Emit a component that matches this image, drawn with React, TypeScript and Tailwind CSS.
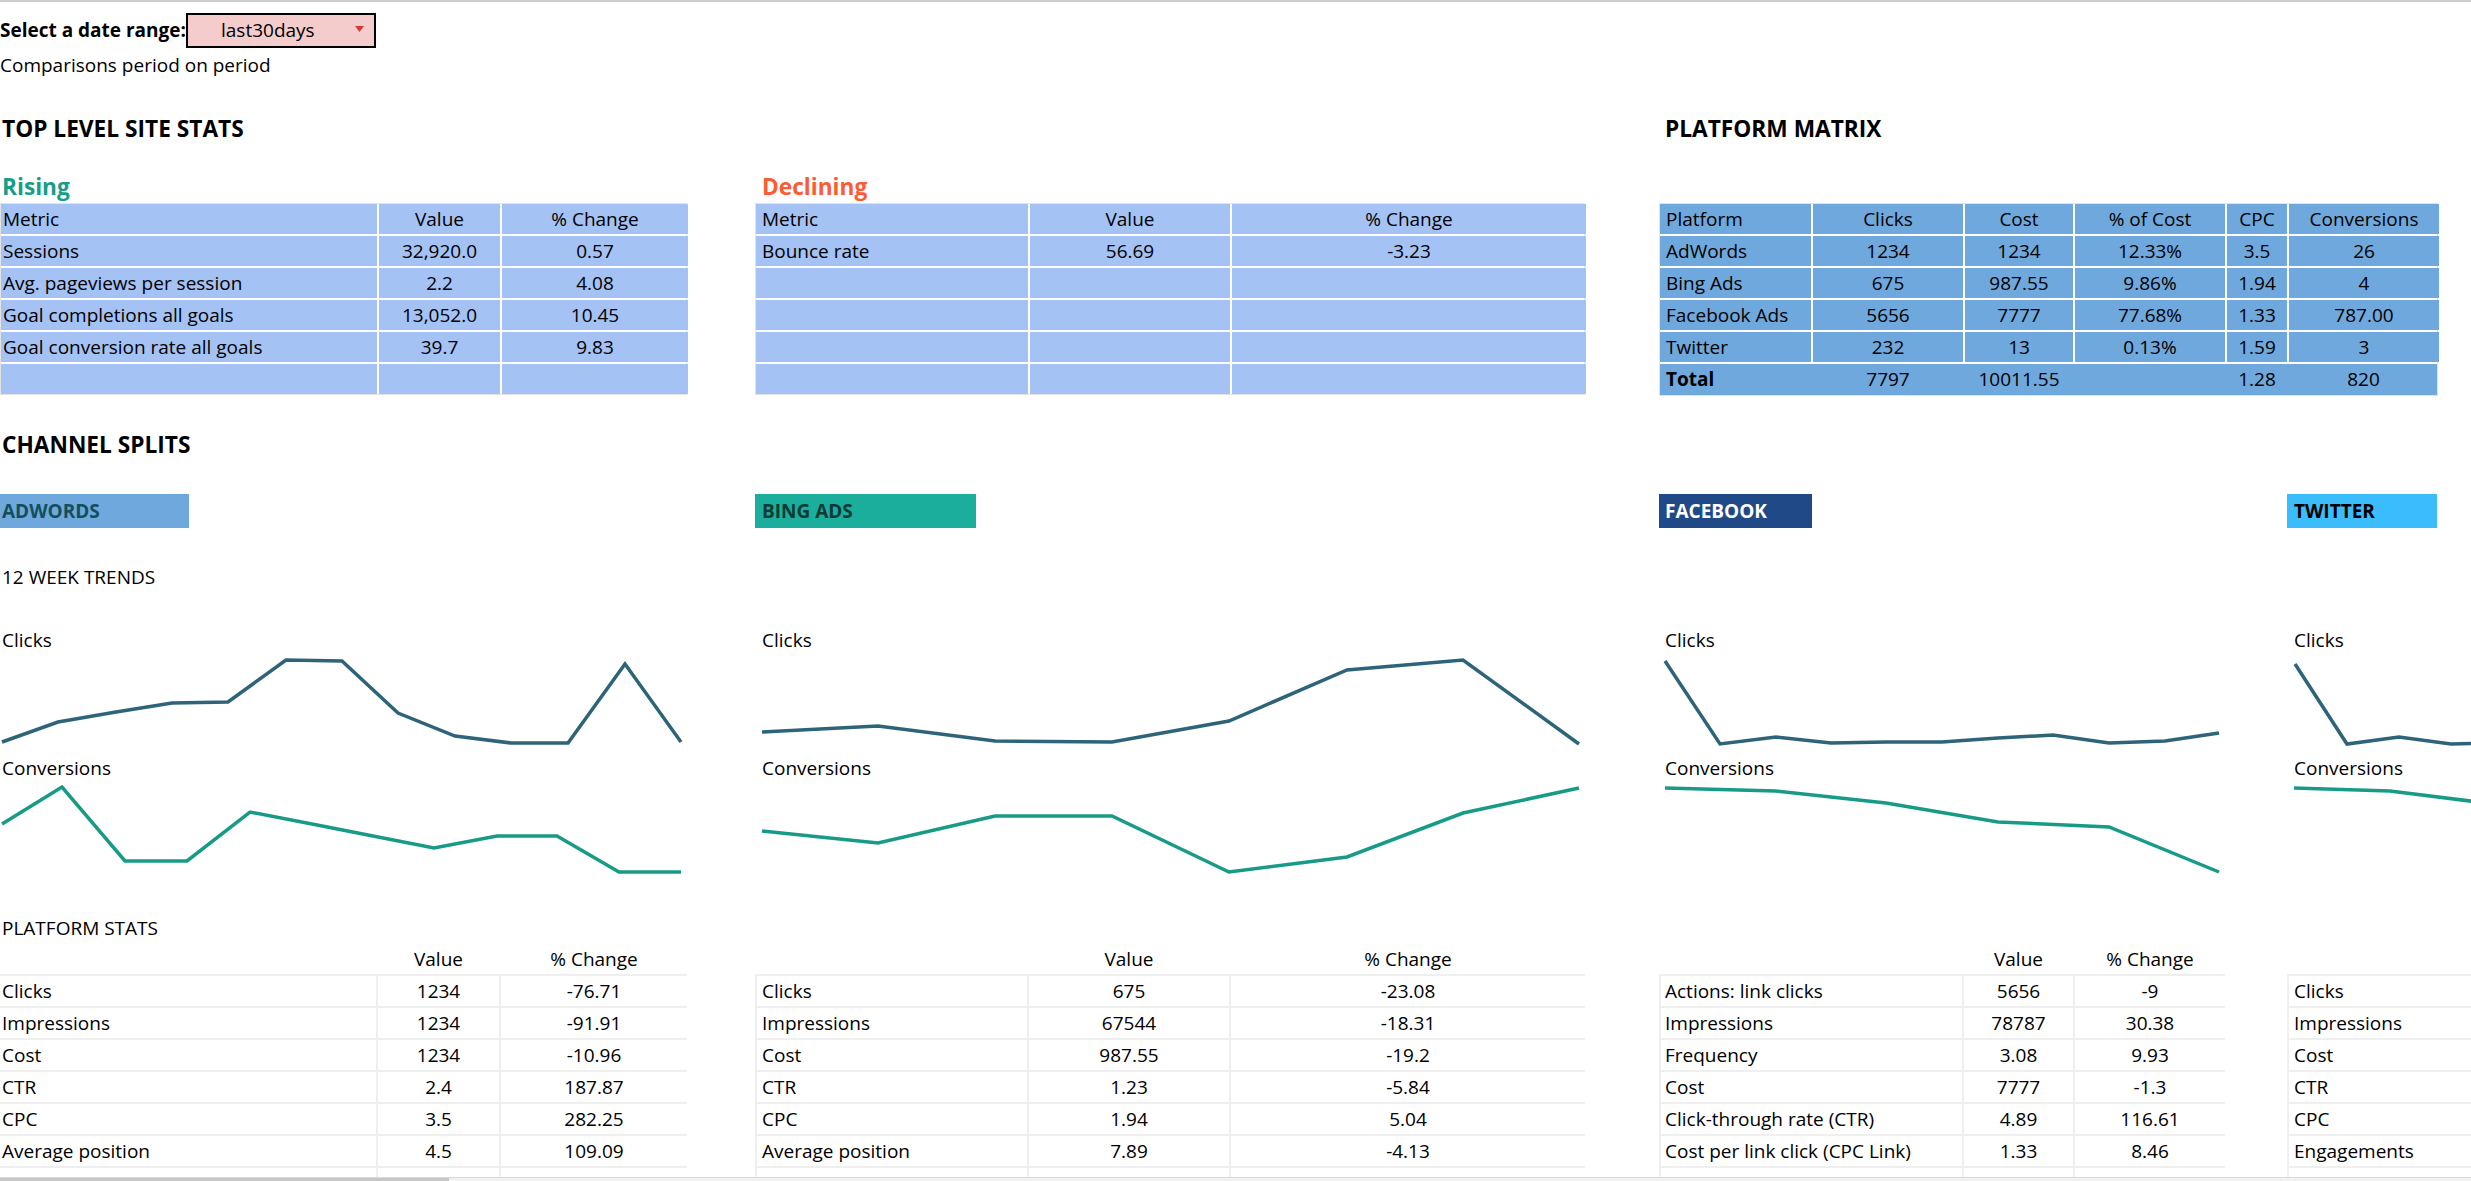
import type { ReactNode } from 'react';

type Pt = [number, number];

const CLICKS = '#2e6479';
const CONV = '#179b87';

// spark line drawn in the column's own pixel space
function Trend({ points, color, width }: { points: Pt[]; color: string; width: number }) {
  return (
    <svg width={width} height={96} className="block overflow-visible">
      <polyline
        points={points.map((p) => p.join(',')).join(' ')}
        fill="none"
        stroke={color}
        strokeWidth={3.5}
        strokeLinejoin="miter"
      />
    </svg>
  );
}

function FilledTable({
  cols,
  rows,
  fill,
  pad,
}: {
  cols: string;
  rows: string[][];
  fill: string;
  pad: string;
}) {
  return (
    <div className={`grid ${cols} gap-[2px] border border-[#e3e3e3] bg-white`}>
      {rows.map((r, i) =>
        r.map((c, j) => (
          <div
            key={`${i}-${j}`}
            className={`${fill} h-[30px] flex items-center whitespace-nowrap ${j === 0 ? `${pad} justify-start` : 'justify-center'}`}
          >
            {c}
          </div>
        )),
      )}
    </div>
  );
}

function StatsTable({
  cols,
  rows,
  pad,
  flush,
  noHeader,
}: {
  cols: string;
  rows: string[][];
  pad: string;
  flush?: boolean;
  noHeader?: boolean;
}) {
  const all = [...rows, ['', '', '']];
  return (
    <div>
      <div className={`grid ${cols} gap-[2px] h-[30px] items-center ${flush ? '' : 'pl-[2px]'}`}>
        <div />
        <div className="text-center">{noHeader ? '' : 'Value'}</div>
        <div className="text-center">{noHeader ? '' : '% Change'}</div>
      </div>
      <div className={`grid ${cols} gap-[2px] bg-[#efefef] pt-[2px] pr-[2px] ${flush ? '' : 'pl-[2px]'}`}>
        {all.map((r, i) =>
          r.map((c, j) => (
            <div
              key={`${i}-${j}`}
              className={`bg-white h-[30px] flex items-center whitespace-nowrap ${j === 0 ? `${pad} justify-start` : 'justify-center'}`}
            >
              {c}
            </div>
          )),
        )}
      </div>
    </div>
  );
}

function Row({ children, className = '' }: { children?: ReactNode; className?: string }) {
  return <div className={`h-[32px] flex items-center whitespace-nowrap ${className}`}>{children}</div>;
}

function Channel({
  width,
  label,
  badge,
  pad,
  trendsLabel,
  clicks,
  conversions,
  statsTitle,
  stats,
}: {
  width: string;
  label: string;
  badge: string;
  pad: string;
  trendsLabel?: boolean;
  clicks: Pt[];
  conversions: Pt[];
  statsTitle?: boolean;
  stats: ReactNode;
}) {
  const w = parseInt(width.replace(/\D/g, ''), 10);
  return (
    <div className={`${width} shrink-0`}>
      <div className={`h-[34px] flex items-center font-bold ${badge} ${pad}`}>{label}</div>
      <Row className={`mt-[33px] ${pad}`}>{trendsLabel ? '12 WEEK TRENDS' : ''}</Row>
      <Row className={`mt-[31px] ${pad}`}>Clicks</Row>
      <Trend points={clicks} color={CLICKS} width={w} />
      <Row className={pad}>Conversions</Row>
      <Trend points={conversions} color={CONV} width={w} />
      <Row className={`mt-[32px] ${pad}`}>{statsTitle ? 'PLATFORM STATS' : ''}</Row>
      {stats}
    </div>
  );
}

export default function App() {
  return (
    <div className="relative w-[2471px] h-[1181px] overflow-hidden bg-white text-black text-[19px] font-['Open_Sans',sans-serif] border-t-2 border-[#cfcfcf]">
      {/* date range picker */}
      <div className="mt-[11px] h-[35px] flex items-center">
        <span className="font-bold">Select a date range:</span>
        <div className="h-[35px] w-[190px] border-2 border-black bg-[#f4cccc] flex items-center justify-between pl-[33px] pr-[10px]">
          <span>last30days</span>
          <svg width="9" height="6" viewBox="0 0 9 6" className="mb-[4px]">
            <path d="M0 0 L9 0 L4.5 6 Z" fill="#d83a3a" />
          </svg>
        </div>
      </div>
      <Row className="mt-px">Comparisons period on period</Row>

      {/* top level stats + platform matrix */}
      <div className="mt-[32px] h-[284px] flex">
        <div className="w-[687px] shrink-0">
          <Row className="pl-[2px] font-bold text-[22.7px]">TOP LEVEL SITE STATS</Row>
          <div className="h-[58px] flex items-end pl-[2px]">
            <span className="font-bold text-[22.7px] leading-[32px] text-[#179e89]">Rising</span>
          </div>
          <FilledTable
            cols="grid-cols-[376px_121px_186px]"
            fill="bg-[#a4c2f4]"
            pad="pl-[2px]"
            rows={[
              ['Metric', 'Value', '% Change'],
              ['Sessions', '32,920.0', '0.57'],
              ['Avg. pageviews per session', '2.2', '4.08'],
              ['Goal completions all goals', '13,052.0', '10.45'],
              ['Goal conversion rate all goals', '39.7', '9.83'],
              ['', '', ''],
            ]}
          />
        </div>

        <div className="ml-[68px] w-[830px] shrink-0">
          <Row />
          <div className="h-[58px] flex items-end pl-[7px]">
            <span className="font-bold text-[22.7px] leading-[32px] text-[#fc5b34]">Declining</span>
          </div>
          <FilledTable
            cols="grid-cols-[272px_200px_354px]"
            fill="bg-[#a4c2f4]"
            pad="pl-[6px]"
            rows={[
              ['Metric', 'Value', '% Change'],
              ['Bounce rate', '56.69', '-3.23'],
              ['', '', ''],
              ['', '', ''],
              ['', '', ''],
              ['', '', ''],
            ]}
          />
        </div>

        <div className="ml-[74px] w-[779px] shrink-0">
          <Row className="pl-[6px] font-bold text-[22.7px]">PLATFORM MATRIX</Row>
          <div className="h-[58px]" />
          <div className="border border-[#e3e3e3] bg-white">
            <MatrixRows />
            <div className="mt-[2px] grid grid-cols-[152px_152px_110px_152px_62px_151px] h-[31px] bg-[#6fa8dc] items-center">
              <div className="pl-[6px] font-bold">Total</div>
              <div className="text-center">7797</div>
              <div className="text-center">10011.55</div>
              <div />
              <div className="text-center">1.28</div>
              <div className="text-center">820</div>
            </div>
          </div>
        </div>
      </div>

      <Row className="mt-[32px] pl-[2px] font-bold text-[22.7px]">CHANNEL SPLITS</Row>

      {/* channel columns */}
      <div className="mt-[33px] flex">
        <Channel
          width="w-[687px]"
          label="ADWORDS"
          badge="bg-[#6fa8dc] text-[#134f5c] w-[189px]"
          pad="pl-[2px]"
          trendsLabel
          statsTitle
          clicks={[
            [2, 86], [58, 66], [116, 56], [172, 47], [228, 46], [286, 4], [342, 5],
            [398, 57], [455, 80], [511, 87], [568, 87], [625, 8], [681, 86],
          ]}
          conversions={[
            [2, 40], [62, 3], [125, 77], [187, 77], [250, 28], [312, 40],
            [373, 52], [434, 64], [497, 52], [557, 52], [619, 88], [681, 88],
          ]}
          stats={
            <StatsTable
              flush
              cols="grid-cols-[376px_121px_186px]"
              pad="pl-[2px]"
              rows={[
                ['Clicks', '1234', '-76.71'],
                ['Impressions', '1234', '-91.91'],
                ['Cost', '1234', '-10.96'],
                ['CTR', '2.4', '187.87'],
                ['CPC', '3.5', '282.25'],
                ['Average position', '4.5', '109.09'],
              ]}
            />
          }
        />
        <div className="ml-[68px]">
          <Channel
            width="w-[830px]"
            label="BING ADS"
            badge="bg-[#1bae9c] text-[#0c3b36] w-[221px]"
            pad="pl-[7px]"
            clicks={[
              [7, 76], [123, 70], [240, 85], [357, 86], [474, 65], [592, 14], [708, 4], [824, 88],
            ]}
            conversions={[
              [7, 47], [123, 59], [240, 32], [357, 32], [474, 88], [592, 73], [708, 29], [824, 4],
            ]}
            stats={
              <StatsTable
                cols="grid-cols-[270px_200px_354px]"
                pad="pl-[5px]"
                rows={[
                  ['Clicks', '675', '-23.08'],
                  ['Impressions', '67544', '-18.31'],
                  ['Cost', '987.55', '-19.2'],
                  ['CTR', '1.23', '-5.84'],
                  ['CPC', '1.94', '5.04'],
                  ['Average position', '7.89', '-4.13'],
                ]}
              />
            }
          />
        </div>
        <div className="ml-[74px]">
          <Channel
            width="w-[566px]"
            label="FACEBOOK"
            badge="bg-[#1f4a87] text-white w-[153px]"
            pad="pl-[6px]"
            clicks={[
              [6, 5], [61, 88], [117, 81], [172, 87], [227, 86], [283, 86],
              [339, 82], [394, 79], [450, 87], [506, 85], [560, 77],
            ]}
            conversions={[
              [6, 4], [117, 7], [227, 19], [339, 38], [450, 43], [560, 88],
            ]}
            stats={
              <StatsTable
                cols="grid-cols-[301px_109px_150px]"
                pad="pl-[4px]"
                rows={[
                  ['Actions: link clicks', '5656', '-9'],
                  ['Impressions', '78787', '30.38'],
                  ['Frequency', '3.08', '9.93'],
                  ['Cost', '7777', '-1.3'],
                  ['Click-through rate (CTR)', '4.89', '116.61'],
                  ['Cost per link click (CPC Link)', '1.33', '8.46'],
                ]}
              />
            }
          />
        </div>
        <div className="ml-[62px]">
          <Channel
            width="w-[184px]"
            label="TWITTER"
            badge="bg-[#3bbcfc] text-black w-[150px]"
            pad="pl-[7px]"
            clicks={[
              [8, 8], [60, 88], [112, 81], [164, 88], [216, 87], [268, 87],
            ]}
            conversions={[
              [7, 4], [103, 7], [199, 19],
            ]}
            stats={
              <StatsTable
                noHeader
                cols="grid-cols-[301px_109px_150px]"
                pad="pl-[5px]"
                rows={[
                  ['Clicks', '', ''],
                  ['Impressions', '', ''],
                  ['Cost', '', ''],
                  ['CTR', '', ''],
                  ['CPC', '', ''],
                  ['Engagements', '', ''],
                ]}
              />
            }
          />
        </div>
      </div>

      {/* horizontal scrollbar */}
      <div className="absolute left-0 right-0 bottom-0 h-[4px] bg-[#f1f1f1] border-t border-[#dadada]">
        <div className="h-full w-[449px] bg-[#c6c6c6]" />
      </div>
    </div>
  );
}

function MatrixRows() {
  const rows = [
    ['Platform', 'Clicks', 'Cost', '% of Cost', 'CPC', 'Conversions'],
    ['AdWords', '1234', '1234', '12.33%', '3.5', '26'],
    ['Bing Ads', '675', '987.55', '9.86%', '1.94', '4'],
    ['Facebook Ads', '5656', '7777', '77.68%', '1.33', '787.00'],
    ['Twitter', '232', '13', '0.13%', '1.59', '3'],
  ];
  return (
    <div className="grid grid-cols-[151px_150px_108px_150px_60px_150px] gap-[2px]">
      {rows.map((r, i) =>
        r.map((c, j) => (
          <div
            key={`${i}-${j}`}
            className={`bg-[#6fa8dc] h-[30px] flex items-center ${j === 0 ? 'pl-[6px]' : 'justify-center'}`}
          >
            {c}
          </div>
        )),
      )}
    </div>
  );
}
